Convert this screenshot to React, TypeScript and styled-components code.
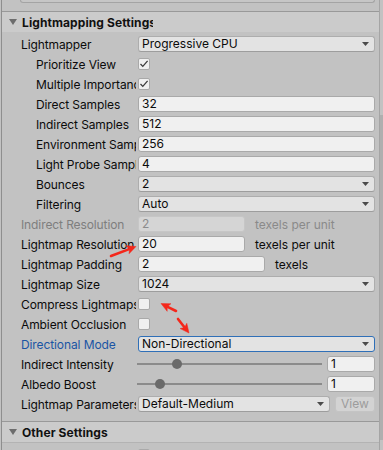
import React from "react";
import styled, { createGlobalStyle } from "styled-components";

const Global = createGlobalStyle`
  *, *::before, *::after { box-sizing: border-box; }
  html, body { margin: 0; padding: 0; background: #c2c2c2; overflow: hidden; }
  body {
    font-family: Inter, "Noto Sans", "Liberation Sans", sans-serif;
    font-size: 12px;
    color: #0b0b0b;
  }
`;

const Window = styled.div`
  position: relative;
  display: flex;
  width: 383px;
  height: 450px;
  overflow: hidden;
  background: #c2c2c2;
`;

const Panel = styled.div`
  flex: 1;
  min-width: 0;
  margin-left: 1px;
  border-left: 1px solid #8e8e8e;
  display: flex;
  flex-direction: column;
  & > * {
    flex-shrink: 0;
  }
`;

const ScrollTrack = styled.div`
  width: 4px;
  border-left: 1px solid #a5a5a5;
  display: flex;
  flex-direction: column;
  padding-top: 115px;
`;

const ScrollThumb = styled.div`
  height: 325px;
  background: #afafaf;
`;

const Stub = styled.div`
  height: 3px;
  margin: 0 4px 8px 18px;
  border: 1px solid #a4a4a4;
  border-top: none;
  border-radius: 0 0 3px 3px;
  background: #c6c6c6;
`;

const SectionHeader = styled.div<{ $bottomLine?: boolean }>`
  height: ${(p) => (p.$bottomLine ? 22 : 21)}px;
  border-top: 1px solid #999999;
  border-bottom: ${(p) => (p.$bottomLine ? "1px solid #b3b3b3" : "none")};
  background: #cbcbcb;
  display: flex;
  align-items: center;
  padding-left: 7px;
  gap: 5px;
`;

const HeaderTitle = styled.div`
  font-weight: 700;
  width: 131px;
  overflow: hidden;
  white-space: nowrap;
  letter-spacing: 0.1px;
  color: #111111;
`;

const Rows = styled.div<{ $bottom: number }>`
  display: flex;
  flex-direction: column;
  padding: 2px 4px ${(p) => p.$bottom}px 0;
  & > * {
    flex-shrink: 0;
  }
`;

const Row = styled.div`
  display: grid;
  grid-template-columns: 134px 1fr;
  height: 20px;
  align-items: center;
`;

type Tone = "normal" | "disabled" | "active";

const Label = styled.div<{ $indent?: boolean; $tone?: Tone }>`
  padding-left: ${(p) => (p.$indent ? 34 : 19)}px;
  overflow: hidden;
  white-space: nowrap;
  letter-spacing: -0.1px;
  color: ${(p) =>
    p.$tone === "disabled" ? "#7e7e7e" : p.$tone === "active" ? "#1a55a4" : "#0b0b0b"};
`;

const Control = styled.div`
  margin-left: 2px;
  display: flex;
  align-items: center;
  min-width: 0;
`;

const TextField = styled.div<{ $width?: number; $disabled?: boolean }>`
  height: 16px;
  ${(p) => (p.$width ? `width: ${p.$width}px;` : "flex: 1;")}
  background: ${(p) => (p.$disabled ? "#d5d5d5" : "#f0f0f0")};
  border: 1px solid ${(p) => (p.$disabled ? "#c6c6c6" : "#a9a9a9")};
  border-radius: 3px;
  padding: 0 3px;
  line-height: 14px;
  color: ${(p) => (p.$disabled ? "#8c8c8c" : "#0b0b0b")};
  white-space: nowrap;
  overflow: hidden;
`;

const Dropdown = styled.div<{ $focused?: boolean }>`
  flex: 1;
  height: 16px;
  min-width: 0;
  background: #e3e3e3;
  border: 1px solid ${(p) => (p.$focused ? "#2f6fb7" : "#adadad")};
  border-bottom-color: ${(p) => (p.$focused ? "#2f6fb7" : "#9d9d9d")};
  border-radius: 3px;
  padding: 0 5px 0 3px;
  display: flex;
  align-items: center;
  justify-content: space-between;
  line-height: 14px;
  white-space: nowrap;
`;

const Suffix = styled.span<{ $disabled?: boolean }>`
  margin-left: 10px;
  color: ${(p) => (p.$disabled ? "#8a8a8a" : "#0b0b0b")};
  white-space: nowrap;
`;

const CheckBox = styled.div`
  width: 12px;
  height: 12px;
  background: #f0f0f0;
  border: 1px solid #a9a9a9;
  border-radius: 2px;
  display: flex;
  align-items: center;
  justify-content: center;
`;

const Track = styled.div`
  position: relative;
  flex: 1;
  height: 2px;
  margin-left: -1px;
  background: #8b8b8b;
`;

const Knob = styled.div`
  position: absolute;
  top: -4px;
  width: 10px;
  height: 10px;
  border-radius: 50%;
  background: #6a6a6a;
`;

const NumberField = styled(TextField)`
  width: 48px;
  flex: none;
  margin-left: 5px;
`;

const ViewButton = styled.div`
  width: 40px;
  height: 16px;
  margin-left: 5px;
  background: #d3d3d3;
  border: 1px solid #c4c4c4;
  border-radius: 3px;
  color: #9c9c9c;
  line-height: 14px;
  text-align: center;
`;

const Overlay = styled.svg`
  position: absolute;
  left: 0;
  top: 0;
  pointer-events: none;
`;

const Triangle = () => (
  <svg width="8" height="6" viewBox="0 0 8 6">
    <polygon points="0,0 8,0 4,6" fill="#6d6d6d" />
  </svg>
);

const Caret = () => (
  <svg width="7" height="4" viewBox="0 0 7 4" style={{ flex: "none" }}>
    <polygon points="0,0 7,0 3.5,4" fill="#4b4b4b" />
  </svg>
);

const Check = ({ on }: { on?: boolean }) => (
  <CheckBox>
    {on && (
      <svg width="10" height="10" viewBox="0 0 10 10">
        <polyline points="1.5,5 3.8,7.4 8.6,1.8" fill="none" stroke="#3c3c3c" strokeWidth="1.3" />
      </svg>
    )}
  </CheckBox>
);

const Slider = ({ value, max }: { value: number; max: number }) => {
  const f = value / max;
  return (
    <>
      <Track>
        <Knob style={{ left: `calc((100% - 10px) * ${f})` }} />
      </Track>
      <NumberField>{value}</NumberField>
    </>
  );
};

const Arrow = ({ x1, y1, x2, y2 }: { x1: number; y1: number; x2: number; y2: number }) => {
  const dx = x2 - x1;
  const dy = y2 - y1;
  const len = Math.hypot(dx, dy);
  const ux = dx / len;
  const uy = dy / len;
  const L = 9;
  const H = 8.5;
  const bx = x2 - ux * L;
  const by = y2 - uy * L;
  const px = -uy * (H / 2);
  const py = ux * (H / 2);
  return (
    <g fill="#f4271b" stroke="#f4271b">
      <line x1={x1} y1={y1} x2={bx + ux} y2={by + uy} strokeWidth="2.6" strokeLinecap="round" />
      <polygon
        points={`${x2},${y2} ${bx + px},${by + py} ${bx + ux * 2},${by + uy * 2} ${bx - px},${by - py}`}
        strokeWidth="0.5"
      />
    </g>
  );
};

export default function App() {
  return (
    <Window>
      <Global />
      <Panel>
        <Stub />
        <SectionHeader>
          <Triangle />
          <HeaderTitle>Lightmapping Settings</HeaderTitle>
        </SectionHeader>
        <Rows $bottom={7}>
          <Row>
            <Label>Lightmapper</Label>
            <Control>
              <Dropdown>
                <span>Progressive CPU</span>
                <Caret />
              </Dropdown>
            </Control>
          </Row>
          <Row>
            <Label $indent>Prioritize View</Label>
            <Control>
              <Check on />
            </Control>
          </Row>
          <Row>
            <Label $indent>Multiple Importance Sampling</Label>
            <Control>
              <Check on />
            </Control>
          </Row>
          <Row>
            <Label $indent>Direct Samples</Label>
            <Control>
              <TextField>32</TextField>
            </Control>
          </Row>
          <Row>
            <Label $indent>Indirect Samples</Label>
            <Control>
              <TextField>512</TextField>
            </Control>
          </Row>
          <Row>
            <Label $indent>Environment Samples</Label>
            <Control>
              <TextField>256</TextField>
            </Control>
          </Row>
          <Row>
            <Label $indent>Light Probe Sample Multiplier</Label>
            <Control>
              <TextField>4</TextField>
            </Control>
          </Row>
          <Row>
            <Label $indent>Bounces</Label>
            <Control>
              <Dropdown>
                <span>2</span>
                <Caret />
              </Dropdown>
            </Control>
          </Row>
          <Row>
            <Label $indent>Filtering</Label>
            <Control>
              <Dropdown>
                <span>Auto</span>
                <Caret />
              </Dropdown>
            </Control>
          </Row>
          <Row>
            <Label $tone="disabled">Indirect Resolution</Label>
            <Control>
              <TextField $width={107} $disabled>
                2
              </TextField>
              <Suffix $disabled>texels per unit</Suffix>
            </Control>
          </Row>
          <Row>
            <Label>Lightmap Resolution</Label>
            <Control>
              <TextField $width={107}>20</TextField>
              <Suffix>texels per unit</Suffix>
            </Control>
          </Row>
          <Row>
            <Label>Lightmap Padding</Label>
            <Control>
              <TextField $width={127}>2</TextField>
              <Suffix>texels</Suffix>
            </Control>
          </Row>
          <Row>
            <Label>Lightmap Size</Label>
            <Control>
              <Dropdown>
                <span>1024</span>
                <Caret />
              </Dropdown>
            </Control>
          </Row>
          <Row>
            <Label>Compress Lightmaps</Label>
            <Control>
              <Check />
            </Control>
          </Row>
          <Row>
            <Label>Ambient Occlusion</Label>
            <Control>
              <Check />
            </Control>
          </Row>
          <Row>
            <Label $tone="active">Directional Mode</Label>
            <Control>
              <Dropdown $focused>
                <span>Non-Directional</span>
                <Caret />
              </Dropdown>
            </Control>
          </Row>
          <Row>
            <Label>Indirect Intensity</Label>
            <Control>
              <Slider value={1} max={5} />
            </Control>
          </Row>
          <Row>
            <Label>Albedo Boost</Label>
            <Control>
              <Slider value={1} max={10} />
            </Control>
          </Row>
          <Row>
            <Label>Lightmap Parameters</Label>
            <Control>
              <Dropdown>
                <span>Default-Medium</span>
                <Caret />
              </Dropdown>
              <ViewButton>View</ViewButton>
            </Control>
          </Row>
        </Rows>
        <SectionHeader $bottomLine>
          <Triangle />
          <HeaderTitle>Other Settings</HeaderTitle>
        </SectionHeader>
        <Rows $bottom={0}>
          <Row>
            <Label $indent></Label>
            <Control>
              <Check />
            </Control>
          </Row>
        </Rows>
      </Panel>
      <ScrollTrack>
        <ScrollThumb />
      </ScrollTrack>
      <Overlay width="383" height="450" viewBox="0 0 383 450">
        <Arrow x1={111} y1={256} x2={136} y2={246.5} />
        <Arrow x1={176} y1={311} x2={161} y2={303.5} />
        <Arrow x1={178} y1={319} x2={189} y2={333} />
      </Overlay>
    </Window>
  );
}
